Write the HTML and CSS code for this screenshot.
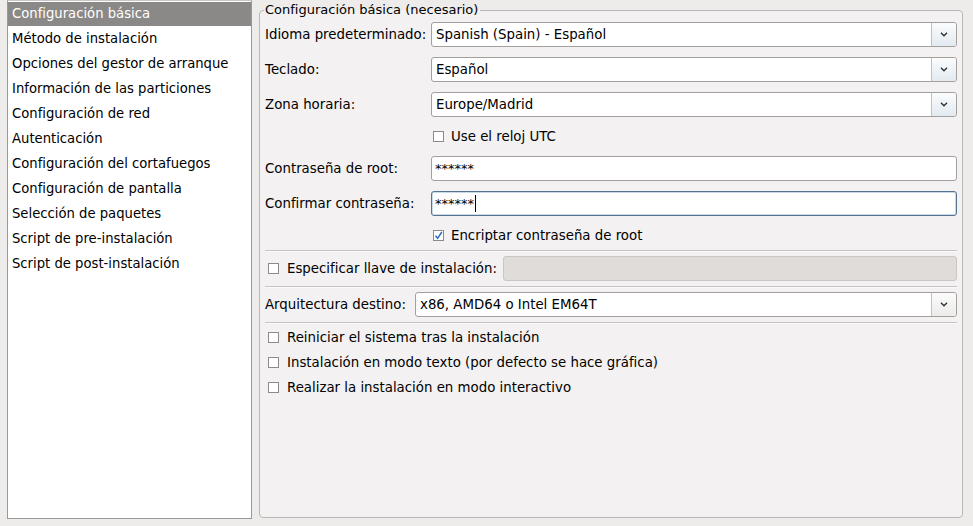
FILE: index.html
```html
<!DOCTYPE html>
<html lang="es">
<head>
<meta charset="utf-8">
<title>Configuración básica</title>
<link rel="stylesheet" href="styles.css">
</head>
<body>
<div class="window">
  <ul class="sidebar">
    <li class="item selected">Configuración básica</li>
    <li class="item">Método de instalación</li>
    <li class="item">Opciones del gestor de arranque</li>
    <li class="item">Información de las particiones</li>
    <li class="item">Configuración de red</li>
    <li class="item">Autenticación</li>
    <li class="item">Configuración del cortafuegos</li>
    <li class="item">Configuración de pantalla</li>
    <li class="item">Selección de paquetes</li>
    <li class="item">Script de pre-instalación</li>
    <li class="item">Script de post-instalación</li>
  </ul>
  <fieldset class="frame">
    <legend class="legend">Configuración básica (necesario)</legend>
    <div class="form">
      <span class="lbl">Idioma predeterminado:</span>
      <div class="combo"><span class="combo-text">Spanish (Spain) - Español</span><span class="combo-btn"><svg width="8" height="5" viewBox="0 0 8 5"><path d="M1 0.8 L4 3.8 L7 0.8" fill="none" stroke="#2e3436" stroke-width="1.4"/></svg></span></div>

      <span class="lbl">Teclado:</span>
      <div class="combo"><span class="combo-text">Español</span><span class="combo-btn"><svg width="8" height="5" viewBox="0 0 8 5"><path d="M1 0.8 L4 3.8 L7 0.8" fill="none" stroke="#2e3436" stroke-width="1.4"/></svg></span></div>

      <span class="lbl">Zona horaria:</span>
      <div class="combo"><span class="combo-text">Europe/Madrid</span><span class="combo-btn"><svg width="8" height="5" viewBox="0 0 8 5"><path d="M1 0.8 L4 3.8 L7 0.8" fill="none" stroke="#2e3436" stroke-width="1.4"/></svg></span></div>

      <span class="lbl"></span>
      <div class="check-row indent"><span class="cb"></span><span>Use el reloj UTC</span></div>

      <span class="lbl">Contraseña de root:</span>
      <div class="entry"><span class="pw">******</span></div>

      <span class="lbl">Confirmar contraseña:</span>
      <div class="entry focused"><span class="pw">******</span><span class="caret"></span></div>

      <span class="lbl"></span>
      <div class="check-row indent"><span class="cb checked"><svg width="9" height="9" viewBox="0 0 9 9"><path d="M1.5 4.8 L3.6 7.3 L7.8 1" fill="none" stroke="#2f6bbd" stroke-width="1.5"/></svg></span><span>Encriptar contraseña de root</span></div>
    </div>

    <div class="sep"></div>

    <div class="key-row">
      <span class="cb"></span>
      <span class="key-label">Especificar llave de instalación:</span>
      <div class="entry disabled"></div>
    </div>

    <div class="sep"></div>

    <div class="arch-row">
      <span class="arch-label">Arquitectura destino:</span>
      <div class="combo"><span class="combo-text">x86, AMD64 o Intel EM64T</span><span class="combo-btn"><svg width="8" height="5" viewBox="0 0 8 5"><path d="M1 0.8 L4 3.8 L7 0.8" fill="none" stroke="#2e3436" stroke-width="1.4"/></svg></span></div>
    </div>

    <div class="sep sep-last"></div>

    <div class="opts">
      <div class="opt"><span class="cb"></span><span>Reiniciar el sistema tras la instalación</span></div>
      <div class="opt"><span class="cb"></span><span>Instalación en modo texto (por defecto se hace gráfica)</span></div>
      <div class="opt"><span class="cb"></span><span>Realizar la instalación en modo interactivo</span></div>
    </div>
  </fieldset>
</div>
</body>
</html>
```

FILE: styles.css
```css
* { box-sizing: border-box; }

html, body {
  margin: 0;
  padding: 0;
  background: #edeceb;
  font-family: "DejaVu Sans", "Liberation Sans", sans-serif;
  font-size: 13.33px;
  color: #000;
}

.window {
  display: flex;
  align-items: flex-start;
  gap: 7px;
  padding-left: 7px;
  width: 973px;
  height: 526px;
  overflow: hidden;
}

.sidebar {
  list-style: none;
  margin: 0;
  padding: 0;
  width: 245px;
  height: 519px;
  background: #fff;
  border: 1px solid #9c9895;
  border-top-color: #c9c6c3;
  flex: none;
  font-size: 13.2px;
}

.item {
  height: 25px;
  line-height: 25px;
  padding-left: 4px;
  white-space: nowrap;
}

.item.selected {
  background: #8b8987;
  color: #fff;
  margin-top: 1px;
  height: 24px;
  line-height: 23px;
}

.frame {
  flex: none;
  width: 704px;
  height: 516px;
  margin: 2px 0 0 0;
  padding: 4px 5px 0 5px;
  border: 1px solid #bbb7b4;
  border-radius: 4px;
  background: #f3f1f1;
  min-width: 0;
}

.legend {
  padding: 0 2px 0 1px;
  margin-left: -1px;
  line-height: 16px;
  height: 16px;
  font-size: 13px;
}

.form {
  display: grid;
  grid-template-columns: 166px 1fr;
  grid-template-rows: 25px 25px 25px 19px 25px 25px 19px;
  row-gap: 10px;
  align-items: center;
}

.lbl {
  white-space: nowrap;
}

.combo {
  display: flex;
  align-items: stretch;
  height: 25px;
  background: #fff;
  border: 1px solid #a39f9b;
  border-radius: 3px;
  overflow: hidden;
}

.combo-text {
  flex: 1;
  display: flex;
  align-items: center;
  padding-left: 4px;
  white-space: nowrap;
}

.combo-btn {
  flex: none;
  width: 25px;
  display: flex;
  align-items: center;
  justify-content: center;
  border-left: 1px solid #c3bfbb;
  background: linear-gradient(#fbfcfd, #e2eaf0);
}

.arch-row .combo-btn {
  background: linear-gradient(#fbfbfb, #ecebea);
}

.entry {
  display: flex;
  align-items: center;
  height: 25px;
  background: #fff;
  border: 1px solid #a39f9b;
  border-radius: 3px;
  padding-left: 3px;
}

.entry.focused {
  border-color: #56738f;
  box-shadow: inset 0 0 0 1px #c9d9ea;
}

.pw {
  font-size: 13px;
}

.caret {
  display: inline-block;
  width: 1px;
  height: 17px;
  background: #000;
  margin-left: 1px;
}

.entry.disabled {
  flex: 1;
  background: #dfdcda;
  border-color: #cac6c3;
}

.check-row,
.opt {
  display: flex;
  align-items: center;
  white-space: nowrap;
}

.check-row.indent {
  padding-left: 2px;
}

.cb {
  flex: none;
  width: 11px;
  height: 11px;
  border: 1px solid #8e8a87;
  background: #fff;
  margin-right: 7px;
  display: flex;
  align-items: center;
  justify-content: center;
}

.sep {
  height: 2px;
  border-top: 1px solid #c8c4c1;
  border-bottom: 1px solid #fbfafa;
  margin: 5px 0 4px 0;
}

.sep.sep-last {
  margin-bottom: 1px;
}

.key-row {
  display: flex;
  align-items: center;
  height: 25px;
  padding-left: 3px;
}

.key-row .cb {
  margin-right: 8px;
}

.key-label {
  flex: none;
  width: 216px;
  white-space: nowrap;
}

.arch-row {
  display: flex;
  align-items: center;
  height: 25px;
}

.arch-label {
  flex: none;
  width: 150px;
  white-space: nowrap;
}

.arch-row .combo {
  flex: 1;
}

.opts {
  display: flex;
  flex-direction: column;
}

.opt {
  height: 25px;
  padding-left: 3px;
}

.opt .cb {
  margin-right: 8px;
}
```
